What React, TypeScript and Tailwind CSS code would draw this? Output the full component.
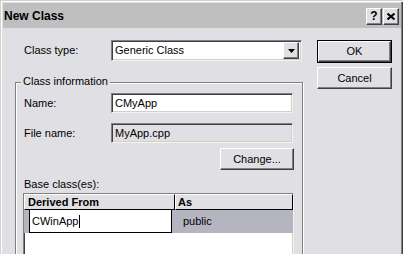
import React from "react";

const raised =
  "border border-t-white border-l-white border-r-[#404040] border-b-[#404040] shadow-[inset_-1px_-1px_0_#808080]";
const sunken =
  "border border-t-[#808080] border-l-[#808080] border-r-[#f4f3ee] border-b-[#f4f3ee] shadow-[inset_1px_1px_0_#404040,inset_-1px_-1px_0_#d4d0c8]";

function Label({ children }: { children: React.ReactNode }) {
  return <div className="w-[87px] shrink-0 text-[11px] leading-none text-black">{children}</div>;
}

export default function App() {
  return (
    <div
      className="w-[403px] h-[254px] overflow-hidden bg-[#e0dfe3] p-[3px] pr-[2px] pb-0 shadow-[inset_1px_1px_0_#d4d0c8,inset_2px_2px_0_#ffffff,inset_-1px_0_0_#404040,inset_-2px_0_0_#808080]"
      style={{ fontFamily: '"Liberation Sans", Arial, sans-serif' }}
    >
      {/* Title bar */}
      <div className="h-[25px] bg-[#bfbfbf] flex items-center pl-[1px] pr-[2px]">
        <div className="text-[12px] font-bold text-black flex-1 leading-none">New Class</div>
        <div className="flex gap-[1px] mt-[1px]">
          <div className={`w-[16px] h-[17px] bg-[#e0dfe3] ${raised} flex items-center justify-center text-[12px] font-bold leading-none`}>
            ?
          </div>
          <div className={`w-[16px] h-[17px] bg-[#e0dfe3] ${raised} flex items-center justify-center`}>
            <svg width="8" height="7" viewBox="0 0 8 7">
              <path d="M0.5 0.5 L7.5 6.5 M7.5 0.5 L0.5 6.5" stroke="#000" strokeWidth="2" />
            </svg>
          </div>
        </div>
      </div>

      {/* Body */}
      <div className="flex pt-[12px]">
        {/* Left column */}
        <div className="w-[300px] pl-[12px] shrink-0 flex flex-col">
          <div className="flex items-center pl-[9px] pr-[0px] h-[21px]">
            <Label>Class type:</Label>
            <div className={`w-[191px] h-[21px] bg-white ${sunken} flex items-center pl-[3px] pr-[2px]`}>
              <span className="flex-1 text-[11px] leading-none">Generic Class</span>
              <div className={`w-[16px] h-[17px] bg-[#e0dfe3] ${raised} flex items-center justify-center`}>
                <svg width="7" height="4" viewBox="0 0 7 4">
                  <path d="M0 0 H7 L3.5 4 Z" fill="#000" />
                </svg>
              </div>
            </div>
          </div>

          {/* Group box */}
          <div className="relative mt-[21px] w-[288px] h-[200px] border border-[#808080] shadow-[inset_1px_1px_0_#ffffff,1px_1px_0_#ffffff] pl-[8px] pt-[10px]">
            <div className="absolute left-[5px] top-[-7px] bg-[#e0dfe3] px-[2px] text-[11px] leading-none">
              Class information
            </div>

            <div className="flex items-center h-[20px]">
              <Label>Name:</Label>
              <div className={`w-[182px] h-[20px] bg-white ${sunken} flex items-center pl-[3px] text-[11px] leading-none`}>
                CMyApp
              </div>
            </div>

            <div className="flex items-center h-[20px] mt-[10px]">
              <Label>File name:</Label>
              <div className={`w-[182px] h-[20px] bg-[#e0dfe3] ${sunken} flex items-center pl-[3px] text-[11px] leading-none`}>
                MyApp.cpp
              </div>
            </div>

            <div className="flex justify-end w-[270px] mt-[5px]">
              <div className={`w-[74px] h-[22px] bg-[#e0dfe3] ${raised} flex items-center justify-center text-[11px] leading-none`}>
                Change...
              </div>
            </div>

            <div className="text-[11px] leading-none mt-[9px]">Base class(es):</div>

            {/* List */}
            <div className={`mt-[3px] -ml-[1px] w-[271px] h-[80px] bg-white ${sunken}`}>
              <div className="flex h-[16px] text-[11px] font-bold leading-none">
                <div className="w-[151px] h-[16px] bg-[#e0dfe3] border-t border-l border-t-white border-l-white border-r border-b border-r-black border-b-black flex items-center pl-[3px]">
                  Derived From
                </div>
                <div className="flex-1 h-[16px] bg-[#e0dfe3] border-t border-l border-t-white border-l-white border-r border-b border-r-black border-b-black flex items-center pl-[2px]">
                  As
                </div>
              </div>
              <div className="relative h-[23px] bg-[#b4b5c0] flex items-center text-[11px] leading-none">
                <div className="absolute left-[5px] top-[-1px] w-[143px] h-[24px] bg-white border border-black flex items-center pl-[2px]">
                  CWinApp
                  <span className="inline-block w-[1px] h-[13px] bg-black ml-[1px]" />
                </div>
                <div className="ml-[159px]">public</div>
              </div>
            </div>
          </div>
        </div>

        {/* Right column */}
        <div className="ml-[14px] flex flex-col gap-[4px]">
          <div className="w-[75px] h-[23px] border border-black">
            <div className={`w-full h-full bg-[#e0dfe3] ${raised} flex items-center justify-center text-[11px] leading-none`}>
              OK
            </div>
          </div>
          <div className={`w-[75px] h-[22px] bg-[#e0dfe3] ${raised} flex items-center justify-center text-[11px] leading-none`}>
            Cancel
          </div>
        </div>
      </div>
    </div>
  );
}
